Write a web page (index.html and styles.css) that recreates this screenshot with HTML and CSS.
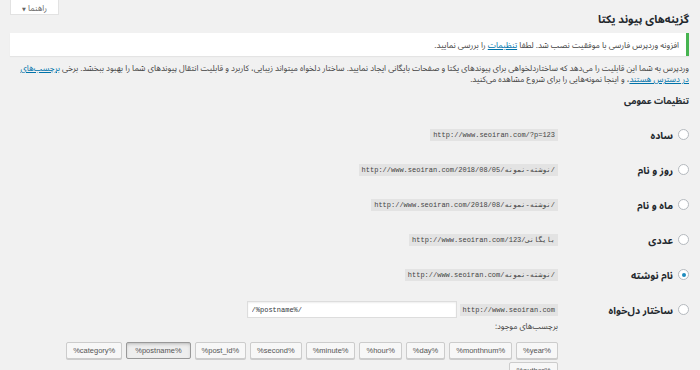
FILE: index.html
```html
<!DOCTYPE html>
<html lang="fa" dir="rtl">
  <head>
    <meta charset="UTF-8" />
    <title>گزینه‌های پیوند یکتا</title>
    <link rel="stylesheet" href="styles.css">
  </head>
  <body>
    <div class="screen-meta">
      <button class="help-tab">راهنما <span class="caret">▼</span></button>
    </div>
    <div class="wrap">
      <h1>گزینه‌های پیوند یکتا</h1>
      <div class="notice">
        افزونه وردپرس فارسی با موفقیت نصب شد. لطفا <a href="#">تنظیمات</a> را بررسی نمایید.
      </div>
      <p class="intro">
        وردپرس به شما این قابلیت را می‌دهد که ساختاردلخواهی برای پیوندهای یکتا و صفحات بایگانی ایجاد نمایید. ساختار دلخواه میتواند زیبایی، کاربرد و قابلیت انتقال پیوندهای شما را بهبود ببخشد. برخی <a href="#">برچسب‌های<br>در دسترس هستند</a>، و اینجا نمونه‌هایی را برای شروع مشاهده می‌کنید.
      </p>
      <h2>تنظیمات عمومی</h2>
      <div class="form-table">
        <label class="row">
          <span class="th"><span class="radio"></span>ساده</span>
          <span class="td"><code dir="ltr">http://www.seoiran.com/?p=123</code></span>
        </label>
        <label class="row">
          <span class="th"><span class="radio"></span>روز و نام</span>
          <span class="td"><code dir="ltr">http://www.seoiran.com/2018/08/05/نوشته-نمونه/</code></span>
        </label>
        <label class="row">
          <span class="th"><span class="radio"></span>ماه و نام</span>
          <span class="td"><code dir="ltr">http://www.seoiran.com/2018/08/نوشته-نمونه/</code></span>
        </label>
        <label class="row">
          <span class="th"><span class="radio"></span>عددی</span>
          <span class="td"><code dir="ltr">http://www.seoiran.com/بایگانی/123</code></span>
        </label>
        <label class="row">
          <span class="th"><span class="radio checked"></span>نام نوشته</span>
          <span class="td"><code dir="ltr">http://www.seoiran.com/نوشته-نمونه/</code></span>
        </label>
        <div class="row custom">
          <span class="th"><span class="radio"></span>ساختار دل‌خواه</span>
          <div class="td">
            <div class="custom-line">
              <code dir="ltr">http://www.seoiran.com</code>
              <input class="structure" type="text" dir="ltr" value="/%postname%/">
            </div>
            <div class="tags-label">برچسب‌های موجود:</div>
            <div class="tags">
              <button class="tag">%year%</button>
              <button class="tag">%monthnum%</button>
              <button class="tag">%day%</button>
              <button class="tag">%hour%</button>
              <button class="tag">%minute%</button>
              <button class="tag">%second%</button>
              <button class="tag">%post_id%</button>
              <button class="tag active">%postname%</button>
              <button class="tag">%category%</button>
              <button class="tag">%author%</button>
            </div>
          </div>
        </div>
      </div>
    </div>
  </body>
</html>
```
FILE: styles.css
```css
body {
  margin: 0;
  background: #f1f1f1;
  color: #444;
  font-family: "Noto Sans Arabic UI", "Noto Sans Arabic", "DejaVu Sans", sans-serif;
  font-size: 9px;
  overflow: hidden;
}
a {
  color: #0073aa;
}
.screen-meta {
  display: flex;
  justify-content: flex-end;
  padding-left: 10px;
}
.help-tab {
  width: 49px;
  height: 15px;
  padding: 0;
  background: #fff;
  border: 1px solid #e2e2e2;
  border-top: none;
  font-family: inherit;
  font-size: 8px;
  color: #666;
}
.caret {
  font-size: 5px;
}
.wrap {
  padding: 0 11px 0 10px;
}
h1 {
  margin: -5px 0 0;
  font-size: 11px;
  font-weight: bold;
  color: #23282d;
  line-height: 18px;
}
.notice {
  margin-top: 5px;
  height: 23px;
  line-height: 23px;
  background: #fff;
  border-right: 3px solid #46b450;
  padding-right: 7px;
  box-shadow: 0 1px 1px rgba(0, 0, 0, 0.05);
  font-size: 8.2px;
}
.intro {
  margin: 6px 0 0;
  line-height: 11px;
  font-size: 8.2px;
}
h2 {
  margin: 10px 0 0;
  font-size: 9px;
  font-weight: bold;
  color: #23282d;
}
.form-table {
  margin-top: 10px;
}
.row {
  display: grid;
  grid-template-columns: 131px 1fr;
  align-items: center;
  height: 35px;
}
.th {
  display: flex;
  align-items: center;
  gap: 5px;
  font-size: 10px;
  font-weight: bold;
  color: #23282d;
}
.radio {
  width: 9px;
  height: 9px;
  border: 1px solid #b4b9be;
  border-radius: 50%;
  background: #fff;
  display: flex;
  align-items: center;
  justify-content: center;
}
.radio.checked::after {
  content: "";
  width: 4px;
  height: 4px;
  border-radius: 50%;
  background: #1e8cbe;
}
.td {
  display: flex;
  justify-content: flex-start;
}
code {
  background: #e3e3e3;
  padding: 1px 3px;
  font-family: "Liberation Mono", "DejaVu Sans Mono", monospace;
  font-size: 7px;
  line-height: 10px;
  color: #444;
}
.custom {
  align-items: start;
  height: auto;
  padding-top: 9px;
}
.custom .th {
  height: 17px;
}
.custom .td {
  display: block;
}
.custom-line {
  display: flex;
  align-items: center;
  gap: 3px;
}
.structure {
  width: 210px;
  height: 17px;
  box-sizing: border-box;
  border: 1px solid #ddd;
  padding: 0 4px;
  font-family: "Liberation Mono", "DejaVu Sans Mono", monospace;
  font-size: 7px;
  color: #32373c;
  box-shadow: inset 0 1px 2px rgba(0, 0, 0, 0.07);
}
.tags-label {
  margin-top: 2px;
  font-size: 8px;
  line-height: 12px;
}
.tags {
  display: flex;
  flex-wrap: wrap;
  gap: 3px 4px;
  width: 496px;
  margin-top: 10px;
}
.tag {
  height: 17px;
  padding: 0 6px;
  background: #f7f7f7;
  border: 1px solid #ccc;
  border-radius: 2px;
  box-shadow: 0 1px 0 #ccc;
  font-family: "Liberation Sans", sans-serif;
  font-size: 7.5px;
  color: #555;
}
.tag.active {
  padding: 0 8px;
  background: #eee;
  border-color: #999;
  box-shadow: inset 0 2px 5px -3px rgba(0, 0, 0, 0.5);
}
```
